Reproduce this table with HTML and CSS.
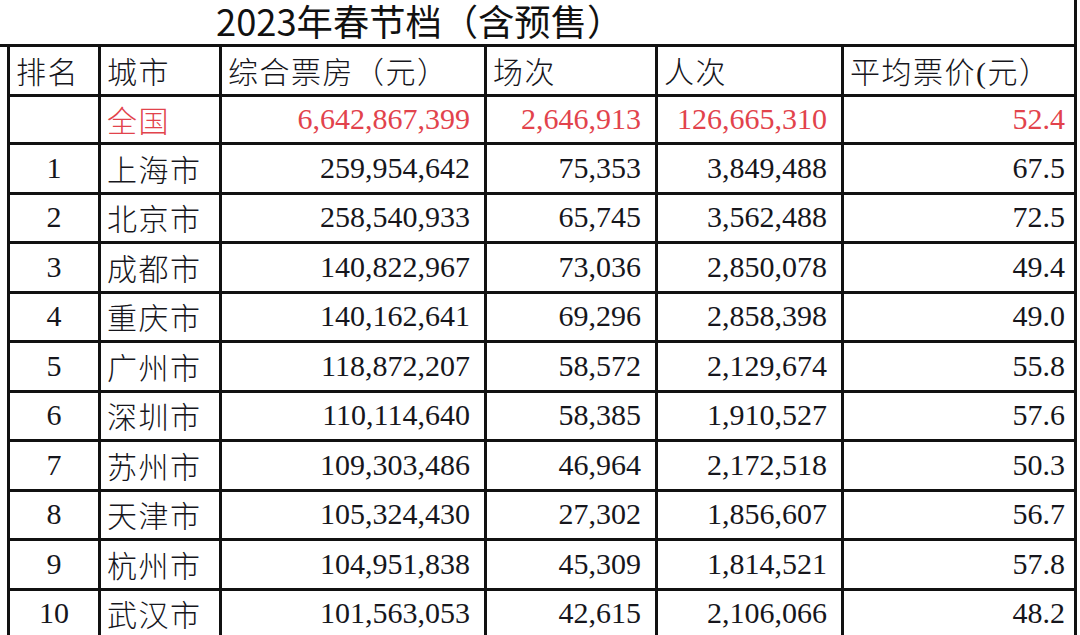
FILE: index.html
```html
<!DOCTYPE html>
<html lang="zh-CN">
<head>
<meta charset="utf-8">
<title>2023年春节档（含预售）</title>
<link rel="stylesheet" href="styles.css">
</head>
<body>
<div class="page">
  <div class="title-bar"><h1 class="title">2023年春节档（含预售）</h1></div>
  <div class="grid">
    <div class="cell head">排名</div>
    <div class="cell head">城市</div>
    <div class="cell head">综合票房（元）</div>
    <div class="cell head">场次</div>
    <div class="cell head">人次</div>
    <div class="cell head">平均票价(元）</div>

    <div class="cell rank"></div>
    <div class="cell city red">全国</div>
    <div class="cell num red">6,642,867,399</div>
    <div class="cell num red">2,646,913</div>
    <div class="cell num red">126,665,310</div>
    <div class="cell num last red">52.4</div>

    <div class="cell rank">1</div><div class="cell city">上海市</div><div class="cell num">259,954,642</div><div class="cell num">75,353</div><div class="cell num">3,849,488</div><div class="cell num last">67.5</div>
    <div class="cell rank">2</div><div class="cell city">北京市</div><div class="cell num">258,540,933</div><div class="cell num">65,745</div><div class="cell num">3,562,488</div><div class="cell num last">72.5</div>
    <div class="cell rank">3</div><div class="cell city">成都市</div><div class="cell num">140,822,967</div><div class="cell num">73,036</div><div class="cell num">2,850,078</div><div class="cell num last">49.4</div>
    <div class="cell rank">4</div><div class="cell city">重庆市</div><div class="cell num">140,162,641</div><div class="cell num">69,296</div><div class="cell num">2,858,398</div><div class="cell num last">49.0</div>
    <div class="cell rank">5</div><div class="cell city">广州市</div><div class="cell num">118,872,207</div><div class="cell num">58,572</div><div class="cell num">2,129,674</div><div class="cell num last">55.8</div>
    <div class="cell rank">6</div><div class="cell city">深圳市</div><div class="cell num">110,114,640</div><div class="cell num">58,385</div><div class="cell num">1,910,527</div><div class="cell num last">57.6</div>
    <div class="cell rank">7</div><div class="cell city">苏州市</div><div class="cell num">109,303,486</div><div class="cell num">46,964</div><div class="cell num">2,172,518</div><div class="cell num last">50.3</div>
    <div class="cell rank">8</div><div class="cell city">天津市</div><div class="cell num">105,324,430</div><div class="cell num">27,302</div><div class="cell num">1,856,607</div><div class="cell num last">56.7</div>
    <div class="cell rank">9</div><div class="cell city">杭州市</div><div class="cell num">104,951,838</div><div class="cell num">45,309</div><div class="cell num">1,814,521</div><div class="cell num last">57.8</div>
    <div class="cell rank">10</div><div class="cell city">武汉市</div><div class="cell num">101,563,053</div><div class="cell num">42,615</div><div class="cell num">2,106,066</div><div class="cell num last">48.2</div>
  </div>
</div>
</body>
</html>
```

FILE: styles.css
```css
html, body {
  margin: 0;
  padding: 0;
  background: #ffffff;
}

.page {
  width: 1080px;
  height: 635px;
  overflow: hidden;
  background: #ffffff;
}

.title-bar {
  width: 1077px;
  height: 47px;
  box-sizing: border-box;
  border-right: 3px solid #111;
  border-bottom: 3px solid #111;
  padding-left: 216px;
}

.title {
  margin: 0;
  font-family: "Noto Sans CJK SC", "Noto Sans", sans-serif;
  font-weight: 400;
  font-size: 36.3px;
  line-height: 41px;
  color: #111;
}

.grid {
  margin-left: 7px;
  width: 1070px;
  box-sizing: border-box;
  border-left: 3px solid #111;
  display: grid;
  grid-template-columns: 91px 121px 265px 171px 186px 233px;
  grid-template-rows: 50px 48px repeat(10, 49.5px);
}

.cell {
  box-sizing: border-box;
  border-right: 3px solid #111;
  border-bottom: 3px solid #111;
  display: flex;
  align-items: center;
  font-family: "Liberation Serif", "Noto Sans CJK SC", serif;
  font-size: 30px;
  color: #16161c;
  white-space: nowrap;
  padding-bottom: 1px;
}

.head {
  padding-left: 6px;
  font-weight: 300;
  letter-spacing: 1.5px;
}

.rank {
  justify-content: center;
}

.city {
  padding-left: 6px;
  font-weight: 300;
  letter-spacing: 1.5px;
}

.num {
  justify-content: flex-end;
  padding-right: 14px;
}

.num.last {
  padding-right: 9px;
}

.red {
  color: #e2434c;
}
```
